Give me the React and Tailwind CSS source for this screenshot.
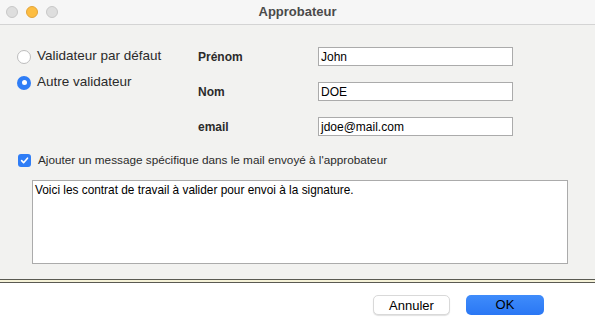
import React from "react";

const fields = [
  { label: "Prénom", value: "John" },
  { label: "Nom", value: "DOE" },
  { label: "email", value: "jdoe@mail.com" },
];

function Radio({ checked, label }) {
  return (
    <div className="flex h-[19px] items-center gap-[6px]">
      {checked ? (
        <span className="flex h-[14px] w-[14px] items-center justify-center rounded-full bg-[#2f7df6]">
          <span className="h-[5px] w-[5px] rounded-full bg-white" />
        </span>
      ) : (
        <span className="h-[14px] w-[14px] rounded-full border border-[#bdbdbd] bg-white" />
      )}
      <span className="text-[13.5px] text-[#2b2b2b]">{label}</span>
    </div>
  );
}

export default function App() {
  return (
    <div
      className="flex h-[325px] w-[595px] flex-col overflow-hidden bg-[#f2f2f0]"
      style={{ fontFamily: '"Liberation Sans", Arial, sans-serif' }}
    >
      {/* barre de titre */}
      <div className="grid h-[25px] grid-cols-[1fr_auto_1fr] items-center border-b border-[#d4d4d4] bg-[#f6f6f6]">
        <div className="flex items-center gap-[8px] pl-[6px] pb-[1px]">
          <span className="h-[12px] w-[12px] rounded-full border border-[#c8c8c8] bg-[#dedede]" />
          <span className="h-[12px] w-[12px] rounded-full border border-[#e2a43a] bg-[#fdbd41]" />
          <span className="h-[12px] w-[12px] rounded-full border border-[#c8c8c8] bg-[#dedede]" />
        </div>
        <div className="pb-[1px] text-[13px] font-bold text-[#4a4a4a]">Approbateur</div>
        <div />
      </div>

      {/* contenu */}
      <div className="flex flex-1 flex-col pl-[17px] pt-[22px]">
        <div className="flex">
          <div className="flex w-[181px] flex-col gap-[7px]">
            <Radio label="Validateur par défaut" />
            <Radio checked label="Autre validateur" />
          </div>
          <div className="grid grid-cols-[120px_195px] gap-y-[16px]">
            {fields.map((f) => (
              <React.Fragment key={f.label}>
                <div className="flex h-[19px] items-center text-[12px] font-bold text-[#2b2b2b]">
                  {f.label}
                </div>
                <div className="flex h-[19px] items-center border border-[#ababab] bg-white pl-[2px] text-[12px] text-black">
                  {f.value}
                </div>
              </React.Fragment>
            ))}
          </div>
        </div>

        <div className="mt-[16px] flex h-[16px] items-center gap-[7px] pl-[1px]">
          <span className="flex h-[13px] w-[13px] items-center justify-center rounded-[3px] bg-[#2f7df6]">
            <svg width="9" height="9" viewBox="0 0 10 10" fill="none">
              <path d="M1.8 5.2 L4 7.4 L8.3 2.4" stroke="white" strokeWidth="1.8" strokeLinecap="round" strokeLinejoin="round" />
            </svg>
          </span>
          <span className="text-[11.75px] text-[#2b2b2b]">
            Ajouter un message spécifique dans le mail envoyé à l'approbateur
          </span>
        </div>

        <div className="ml-[15px] mt-[12px] h-[84px] w-[536px] border border-[#ababab] bg-white px-[2px] pt-[1px] text-[11.85px] text-black">
          Voici les contrat de travail à valider pour envoi à la signature.
        </div>
      </div>

      {/* séparateur */}
      <div className="h-[4px] border-y border-[#5a5a52] bg-[#f5f2d8]" />

      {/* pied */}
      <div className="flex h-[42px] items-start justify-end gap-[16px] bg-white pr-[51px] pt-[12px]">
        <button className="h-[20px] w-[77px] rounded-[5px] border border-[#d9d9d9] bg-white text-[13px] text-black shadow-[0_1px_1px_rgba(0,0,0,0.12)]">
          Annuler
        </button>
        <button className="h-[20px] w-[78px] rounded-[5px] bg-gradient-to-b from-[#3f8cfb] to-[#2a77f4] text-[13px] text-black">
          OK
        </button>
      </div>
    </div>
  );
}
